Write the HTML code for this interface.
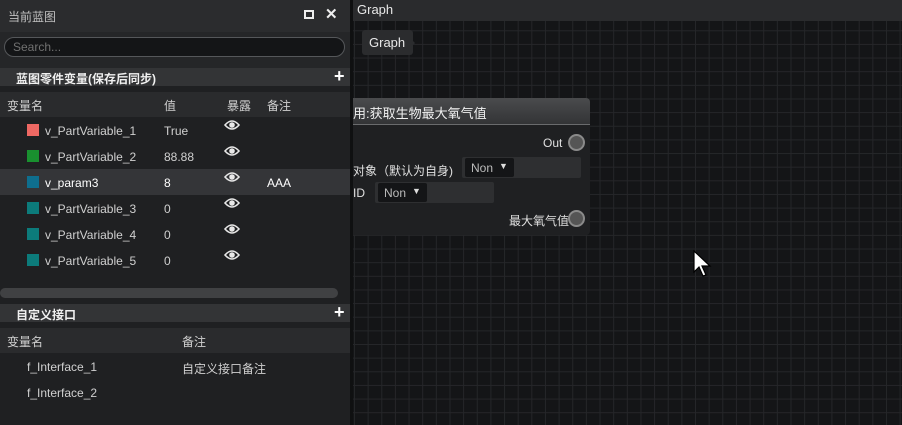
<!DOCTYPE html>
<html><head><meta charset="utf-8"><style>
*{margin:0;padding:0;box-sizing:border-box}
body{width:902px;height:425px;overflow:hidden;background:#141517;font-family:"Liberation Sans","Noto Sans CJK SC",sans-serif;font-size:12px;color:#d0d0d0;position:relative}
.a{position:absolute}
#left{left:0;top:0;width:350px;height:425px;background:#1f2022;overflow:hidden}
#graph{left:353px;top:0;width:549px;height:425px;overflow:hidden;background-color:#141517;
background-image:linear-gradient(#252629 1px,transparent 1px),linear-gradient(90deg,#252629 1px,transparent 1px);
background-size:13.65px 13.65px;background-position:1px 3px}
#sep{left:350px;top:0;width:3px;height:425px;background:#0f1011}
.row{position:absolute;left:0;width:350px;height:26px}
.sq{position:absolute;left:27px;top:7px;width:12px;height:12px}
.t{position:absolute;white-space:nowrap}
</style></head><body>
<div id="left" class="a">
 <div class="a" style="left:0;top:0;width:350px;height:32px;background:#2b2c2e"></div>
 <div class="t" style="left:8px;top:8px;color:#c0c0c0;font-size:12px">当前蓝图</div>
 <div class="a" style="left:304px;top:10px;width:10px;height:9px;border:2px solid #eee"></div>
 <div class="t" style="left:325px;top:5px;color:#eee;font-size:15px;font-weight:bold">✕</div>
 <div class="a" style="left:0;top:32px;width:350px;height:36px;background:#252628"></div>
 <div class="a" style="left:4px;top:37px;width:341px;height:20px;border:1px solid #55575a;border-radius:10px;background:#141517"></div>
 <div class="t" style="left:13px;top:40px;color:#707070;font-size:12px">Search...</div>
 <div class="a" style="left:0;top:68px;width:350px;height:18px;background:#333436"></div>
 <div class="t" style="left:16px;top:70px;color:#f0f0f0;font-weight:bold;font-size:12px">蓝图零件变量(保存后同步)</div>
 <div class="t" style="left:334px;top:66px;color:#fff;font-size:18px;font-weight:bold">+</div>
 <div class="a" style="left:0;top:92px;width:350px;height:25px;background:#2a2b2d"></div>
 <div class="t" style="left:7px;top:97px">变量名</div>
 <div class="t" style="left:164px;top:97px">值</div>
 <div class="t" style="left:227px;top:97px">暴露</div>
 <div class="t" style="left:267px;top:97px">备注</div>

 <div class="row" style="top:117px"><div class="sq" style="background:#ee6863"></div><div class="t" style="left:45px;top:7px">v_PartVariable_1</div><div class="t" style="left:164px;top:7px">True</div></div>
 <div class="row" style="top:143px"><div class="sq" style="background:#19902f"></div><div class="t" style="left:45px;top:7px">v_PartVariable_2</div><div class="t" style="left:164px;top:7px">88.88</div></div>
 <div class="row" style="top:169px;background:#343538"><div class="sq" style="background:#0e6e8e"></div><div class="t" style="left:45px;top:7px;color:#fff">v_param3</div><div class="t" style="left:164px;top:7px;color:#fff">8</div><div class="t" style="left:267px;top:7px;color:#fff">AAA</div></div>
 <div class="row" style="top:195px"><div class="sq" style="background:#0c7b7b"></div><div class="t" style="left:45px;top:7px">v_PartVariable_3</div><div class="t" style="left:164px;top:7px">0</div></div>
 <div class="row" style="top:221px"><div class="sq" style="background:#0c7b7b"></div><div class="t" style="left:45px;top:7px">v_PartVariable_4</div><div class="t" style="left:164px;top:7px">0</div></div>
 <div class="row" style="top:247px"><div class="sq" style="background:#0c7b7b"></div><div class="t" style="left:45px;top:7px">v_PartVariable_5</div><div class="t" style="left:164px;top:7px">0</div></div>

 <svg class="a" style="left:0;top:0" width="350" height="280">
  <g fill="none" stroke="#e8e8e8" stroke-width="1.6">
   <g id="e"><path d="M225 125 Q232 117 239 125 Q232 133 225 125Z"/><circle cx="232" cy="125" r="2" fill="#e8e8e8"/></g>
   <use href="#e" y="26"/><use href="#e" y="52"/><use href="#e" y="78"/><use href="#e" y="104"/><use href="#e" y="130"/>
  </g>
 </svg>

 <div class="a" style="left:0;top:288px;width:338px;height:10px;border-radius:5px;background:#404143"></div>
 <div class="a" style="left:0;top:304px;width:350px;height:18px;background:#333436"></div>
 <div class="t" style="left:16px;top:306px;color:#f0f0f0;font-weight:bold">自定义接口</div>
 <div class="t" style="left:334px;top:302px;color:#fff;font-size:18px;font-weight:bold">+</div>
 <div class="a" style="left:0;top:328px;width:350px;height:25px;background:#2a2b2d"></div>
 <div class="t" style="left:7px;top:333px">变量名</div>
 <div class="t" style="left:182px;top:333px">备注</div>
 <div class="t" style="left:27px;top:360px">f_Interface_1</div>
 <div class="t" style="left:182px;top:360px">自定义接口备注</div>
 <div class="t" style="left:27px;top:386px">f_Interface_2</div>
</div>
<div id="sep" class="a"></div>
<div id="graph" class="a">
 <div class="a" style="left:0;top:0;width:549px;height:21px;background:#2a2b2d"></div>
 <div class="t" style="left:4px;top:2px;color:#e8e8e8;font-size:13px">Graph</div>
 <div class="a" style="left:9px;top:30px;width:51px;height:25px;background:#2b2c2e;border-radius:3px"></div>
 <div class="a" style="left:58px;top:39px;width:0;height:0;border-top:4px solid transparent;border-bottom:4px solid transparent;border-left:4px solid #2b2c2e"></div>
 <div class="t" style="left:16px;top:35px;color:#e8e8e8;font-size:13px">Graph</div>

 <div class="a" style="left:0;top:98px;width:237px;height:137px;background:#1f2022;border-radius:0 4px 4px 0"></div>
 <div class="a" style="left:0;top:98px;width:237px;height:27px;background:linear-gradient(#4a4b4d,#333436);border-bottom:1px solid #6a6b6d;border-radius:0 4px 0 0"></div>
 <div class="t" style="left:0;top:103px;color:#f0f0f0;font-size:13px">用:获取生物最大氧气值</div>
 <div class="t" style="left:190px;top:136px;color:#e0e0e0">Out</div>
 <div class="a" style="left:215px;top:134px;width:17px;height:17px;border-radius:50%;background:#555;border:2px solid #8a8a8a"></div>
 <div class="t" style="left:0;top:162px;color:#e0e0e0">对象（默认为自身)</div>
 <div class="a" style="left:109px;top:157px;width:119px;height:21px;background:#2e2f31;border-radius:2px"></div>
 <div class="a" style="left:112px;top:158px;width:49px;height:19px;background:#141517;border-radius:2px"></div>
 <div class="t" style="left:118px;top:161px;color:#bbb">Non</div><div class="t" style="left:146px;top:161px;color:#ddd;font-size:9px">▼</div>
 <div class="t" style="left:0;top:186px;color:#e0e0e0">ID</div>
 <div class="a" style="left:22px;top:182px;width:119px;height:21px;background:#2e2f31;border-radius:2px"></div>
 <div class="a" style="left:25px;top:183px;width:49px;height:19px;background:#141517;border-radius:2px"></div>
 <div class="t" style="left:31px;top:186px;color:#bbb">Non</div><div class="t" style="left:59px;top:186px;color:#ddd;font-size:9px">▼</div>
 <div class="t" style="left:156px;top:212px;color:#e0e0e0">最大氧气值</div>
 <div class="a" style="left:215px;top:210px;width:17px;height:17px;border-radius:50%;background:#555;border:2px solid #8a8a8a"></div>

 <svg class="a" style="left:339px;top:249px" width="22" height="30"><path d="M2 2 L2 23 L7 18 L11 27 L14 26 L10 17 L18 17 Z" fill="#fff" stroke="#000" stroke-width="1.2"/></svg>
</div>
</body></html>
